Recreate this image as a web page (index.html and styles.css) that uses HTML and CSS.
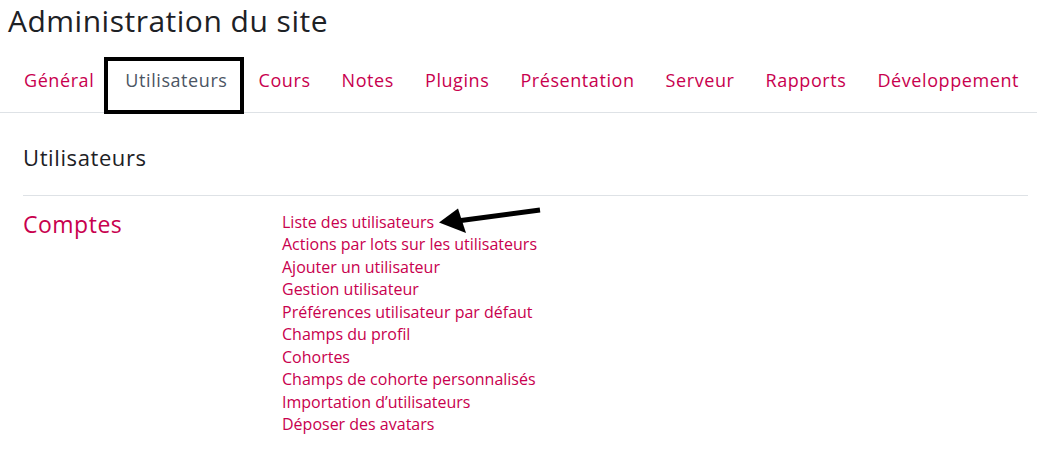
FILE: index.html
```html
<!DOCTYPE html>
<html lang="fr">
<head>
<meta charset="utf-8">
<title>Administration du site</title>
<link rel="stylesheet" href="styles.css">
</head>
<body>
<header class="page-header">
  <h1 class="page-title">Administration du site</h1>
</header>
<nav class="tabs">
  <a class="tab" href="#">Général</a>
  <a class="tab tab-active" href="#">Utilisateurs</a>
  <a class="tab" href="#">Cours</a>
  <a class="tab" href="#">Notes</a>
  <a class="tab" href="#">Plugins</a>
  <a class="tab" href="#">Présentation</a>
  <a class="tab" href="#">Serveur</a>
  <a class="tab" href="#">Rapports</a>
  <a class="tab" href="#">Développement</a>
</nav>
<main class="content">
  <h2 class="section-title">Utilisateurs</h2>
  <div class="category">
    <h3 class="category-title">Comptes</h3>
    <ul class="links">
      <li class="link-item"><a href="#">Liste des utilisateurs</a>
        <svg class="arrow" width="110" height="34" viewBox="0 0 110 34">
          <line x1="105" y1="7" x2="26" y2="17.5" stroke="#000" stroke-width="5"/>
          <polygon points="4,19.5 23,5.5 31,30" fill="#000"/>
        </svg>
      </li>
      <li class="link-item"><a href="#">Actions par lots sur les utilisateurs</a></li>
      <li class="link-item"><a href="#">Ajouter un utilisateur</a></li>
      <li class="link-item"><a href="#">Gestion utilisateur</a></li>
      <li class="link-item"><a href="#">Préférences utilisateur par défaut</a></li>
      <li class="link-item"><a href="#">Champs du profil</a></li>
      <li class="link-item"><a href="#">Cohortes</a></li>
      <li class="link-item"><a href="#">Champs de cohorte personnalisés</a></li>
      <li class="link-item"><a href="#">Importation d’utilisateurs</a></li>
      <li class="link-item"><a href="#">Déposer des avatars</a></li>
    </ul>
  </div>
</main>
</body>
</html>
```

FILE: styles.css
```css
html, body {
  margin: 0;
  padding: 0;
  background: #fff;
}
body {
  font-family: "Open Sans", "DejaVu Sans", sans-serif;
  color: #1d2125;
  width: 1037px;
  overflow: hidden;
}
a {
  text-decoration: none;
  color: #c8004e;
}
.page-header {
  padding: 1px 0 0 8px;
}
.page-title {
  margin: 0;
  font-size: 30px;
  font-weight: 500;
  line-height: 40px;
  letter-spacing: 0.5px;
  color: #1d2125;
}
.tabs {
  display: flex;
  align-items: flex-start;
  margin-top: 22px;
  padding-left: 8px;
  border-bottom: 1px solid #dee2e6;
  height: 50px;
  box-sizing: border-box;
}
.tab {
  padding: 3px 15px 0 16px;
  font-size: 18px;
  line-height: 28px;
  letter-spacing: 0.58px;
  color: #c8004e;
  white-space: nowrap;
}
.tab-active {
  color: #4b5563;
  position: relative;
}
.tab-active::after {
  content: "";
  position: absolute;
  left: -5px;
  right: -1.5px;
  top: -6px;
  bottom: -20px;
  border: 4.5px solid #000;
}
.content {
  padding: 0 9px 0 23px;
}
.section-title {
  margin: 0;
  padding: 31px 0 25px;
  font-size: 22px;
  font-weight: 500;
  line-height: 26px;
  letter-spacing: 0.6px;
  border-bottom: 1px solid #dee2e6;
  color: #1d2125;
}
.category {
  display: grid;
  grid-template-columns: 259px 1fr;
  padding-top: 13px;
}
.category-title {
  margin: 0;
  font-size: 23px;
  font-weight: 500;
  line-height: 30px;
  letter-spacing: 0.5px;
  color: #c8004e;
}
.links {
  list-style: none;
  margin: 0;
  padding: 1.5px 0 0;
}
.link-item {
  font-size: 16px;
  line-height: 22.5px;
  position: relative;
}
.arrow {
  position: absolute;
  left: 153px;
  top: -7.5px;
}
```
